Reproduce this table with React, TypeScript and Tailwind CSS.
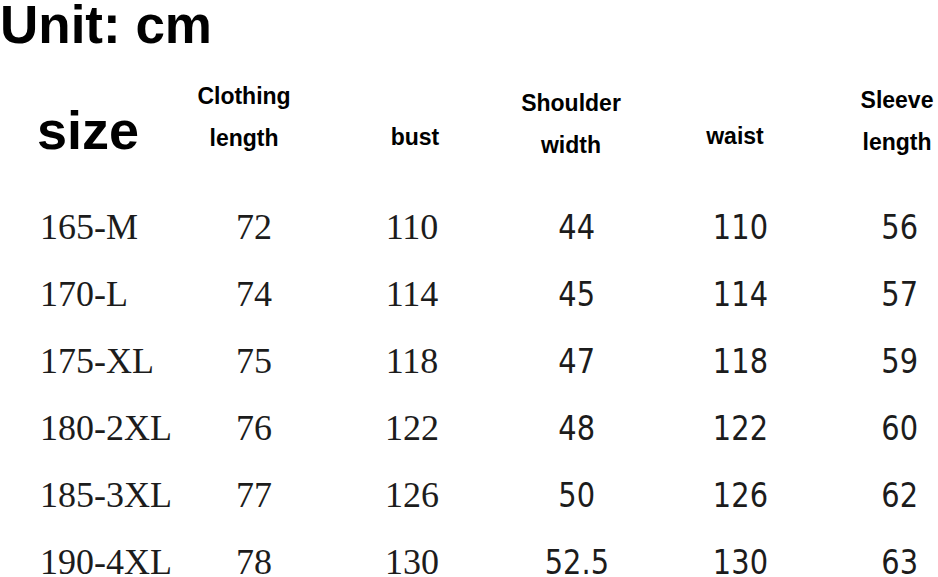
const rows = [
  ['165-M', '72', '110', '44', '110', '56'],
  ['170-L', '74', '114', '45', '114', '57'],
  ['175-XL', '75', '118', '47', '118', '59'],
  ['180-2XL', '76', '122', '48', '122', '60'],
  ['185-3XL', '77', '126', '50', '126', '62'],
  ['190-4XL', '78', '130', '52.5', '130', '63'],
];

const cols = 'grid grid-cols-[175px_158px_158px_172px_154px_166px]';
const serif = "font-['Liberation_Serif',serif] text-[36px]";
const sans = "font-['DejaVu_Sans',sans-serif] text-[34px]";

function Sans({ children }: { children: string }) {
  return <span className="inline-block scale-x-[0.85]">{children}</span>;
}

export default function App() {
  return (
    <div className="w-[938px] h-[577px] overflow-hidden bg-white text-black font-['Liberation_Sans',Arial,sans-serif]">
      <div className="h-[65px]">
        <h1 className="text-[53px] font-bold leading-[56px] -mt-[3px]">Unit: cm</h1>
      </div>

      <div className={`${cols} h-[132px] font-bold text-[23px] leading-[42px]`}>
        <div className="pl-[37px] pt-[41px] text-[54px] leading-none">size</div>
        <div className="pt-[13px] pr-[20px] text-center">
          <div>Clothing</div>
          <div>length</div>
        </div>
        <div className="pt-[54px] pl-[6px] text-center">bust</div>
        <div className="pt-[20px] pr-[12px] text-center">
          <div>Shoulder</div>
          <div>width</div>
        </div>
        <div className="pt-[53px] pr-[10px] text-center">waist</div>
        <div className="pt-[17px] pr-[6px] text-center">
          <div>Sleeve</div>
          <div>length</div>
        </div>
      </div>

      <div className="text-[#1c1c1c]">
        {rows.map((r) => (
          <div key={r[0]} className={`${cols} h-[67px] leading-[67px]`}>
            <div className={`${serif} pl-10`}>{r[0]}</div>
            <div className={`${serif} text-center`}>{r[1]}</div>
            <div className={`${serif} text-center`}>{r[2]}</div>
            <div className={`${sans} text-center`}><Sans>{r[3]}</Sans></div>
            <div className={`${sans} text-center`}><Sans>{r[4]}</Sans></div>
            <div className={`${sans} text-center`}><Sans>{r[5]}</Sans></div>
          </div>
        ))}
      </div>
    </div>
  );
}
